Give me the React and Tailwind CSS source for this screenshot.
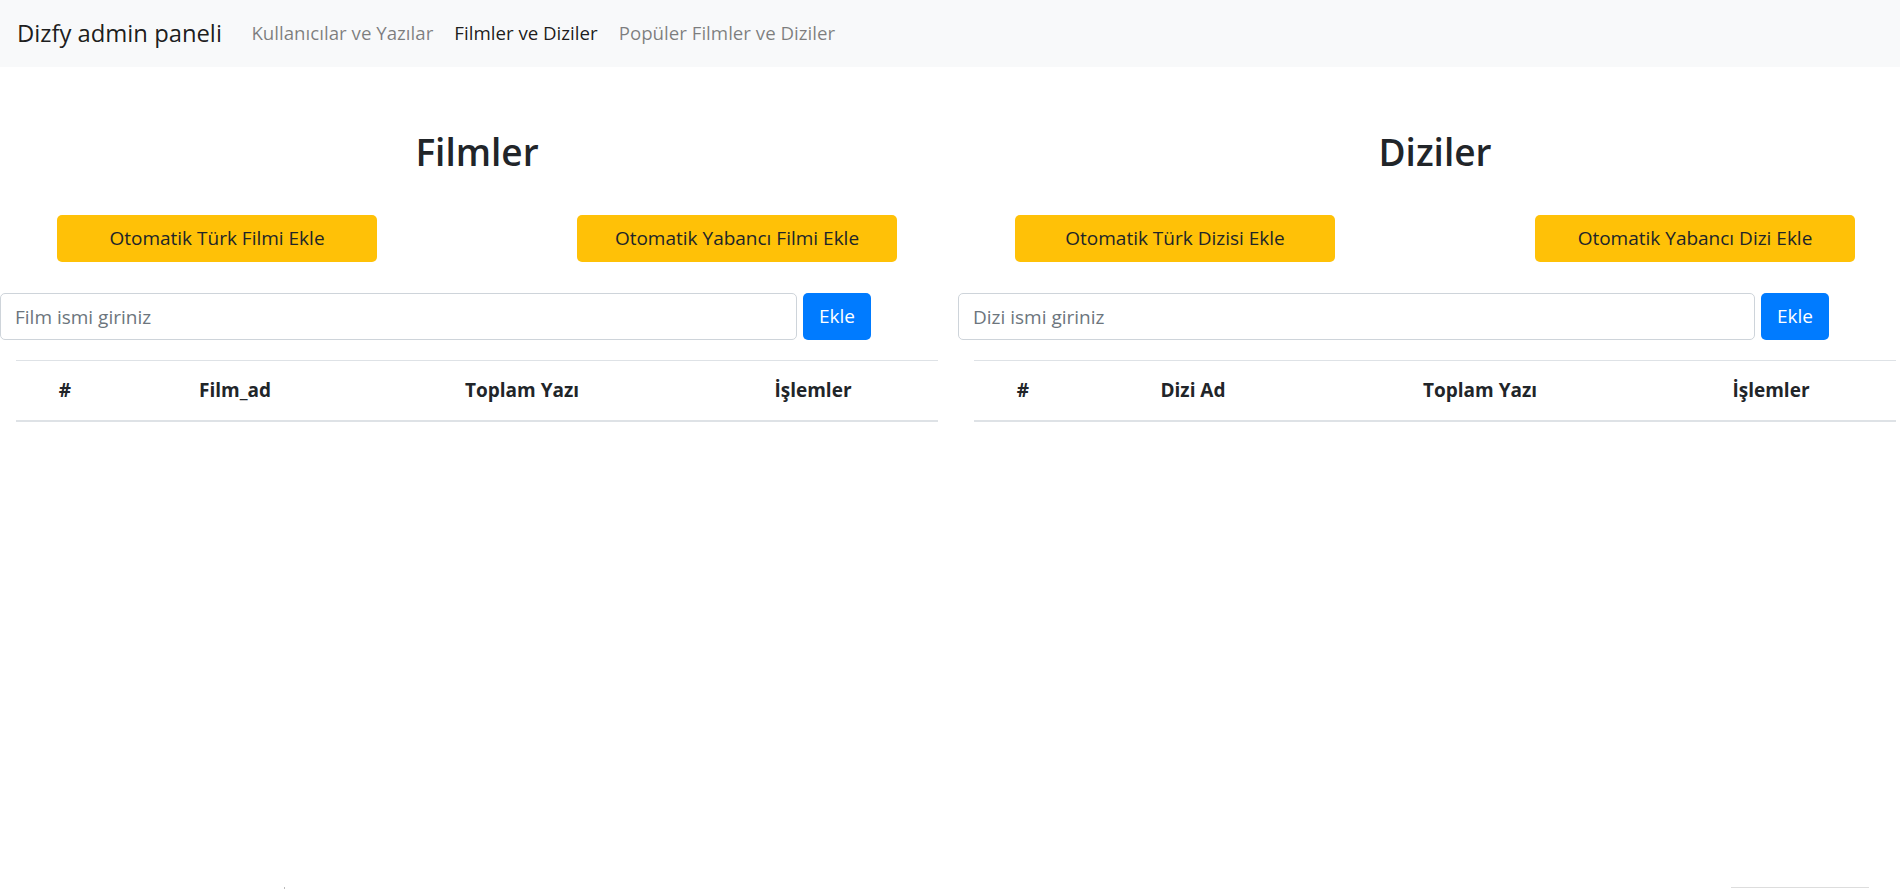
import React from 'react';

const navLinks = [
  { label: 'Kullanıcılar ve Yazılar', active: false },
  { label: 'Filmler ve Diziler', active: true },
  { label: 'Popüler Filmler ve Diziler', active: false },
];

const sections = [
  {
    title: 'Filmler',
    buttons: ['Otomatik Türk Filmi Ekle', 'Otomatik Yabancı Filmi Ekle'],
    placeholder: 'Film ismi giriniz',
    columns: ['#', 'Film_ad', 'Toplam Yazı', 'İşlemler'],
  },
  {
    title: 'Diziler',
    buttons: ['Otomatik Türk Dizisi Ekle', 'Otomatik Yabancı Dizi Ekle'],
    placeholder: 'Dizi ismi giriniz',
    columns: ['#', 'Dizi Ad', 'Toplam Yazı', 'İşlemler'],
  },
];

const Section = ({ section }) => (
  <div className="w-[958px] shrink-0">
    <h2 className="w-[954px] text-center text-[37px] font-semibold leading-[46px] text-[#212529] pt-[62px]">
      {section.title}
    </h2>

    {/* otomatik ekleme */}
    <div className="flex gap-[200px] pl-[57px] mt-[40px]">
      {section.buttons.map((b) => (
        <button
          key={b}
          className="w-[320px] h-[47px] rounded-[5px] bg-[#ffc107] text-[#212529] text-[19px]"
        >
          {b}
        </button>
      ))}
    </div>

    {/* manuel ekleme */}
    <div className="flex items-center gap-[6px] mt-[31px]">
      <input
        type="text"
        placeholder={section.placeholder}
        className="w-[797px] h-[47px] rounded-[5px] border border-[#ced4da] px-[14px] text-[19px] text-[#495057] placeholder:text-[#6c757d] outline-none"
      />
      <button className="w-[68px] h-[47px] rounded-[5px] bg-[#007bff] text-white text-[19px]">
        Ekle
      </button>
    </div>

    <div className="ml-[16px] w-[922px] mt-[20px] border-t border-[#dee2e6]">
      <div className="grid grid-cols-[98px_242px_332px_250px] h-[61px] items-center border-b-2 border-[#dee2e6] text-[19px] font-bold text-[#212529]">
        {section.columns.map((c) => (
          <div key={c} className="text-center">
            {c}
          </div>
        ))}
      </div>
    </div>
  </div>
);

export default function App() {
  return (
    <div className="min-h-screen flex flex-col bg-white overflow-hidden font-['Open_Sans',sans-serif]">
      <nav className="h-[67px] bg-[#f8f9fa] flex items-center px-[17px]">
        <span className="text-[23.8px] text-black/90 mr-[19px]">Dizfy admin paneli</span>
        <div className="flex">
          {navLinks.map((l) => (
            <a
              key={l.label}
              className={`px-[10.5px] text-[18.7px] ${l.active ? 'text-black/90' : 'text-black/50'}`}
            >
              {l.label}
            </a>
          ))}
        </div>
      </nav>

      <main className="flex">
        {sections.map((s) => (
          <Section key={s.title} section={s} />
        ))}
      </main>

      <div className="mt-auto h-[2px] flex">
        <div className="ml-[284px] w-px h-[2px] bg-[#bbb]" />
        <div className="ml-auto mr-[31px] w-[138px] border-t border-[#ddd]" />
      </div>
    </div>
  );
}
